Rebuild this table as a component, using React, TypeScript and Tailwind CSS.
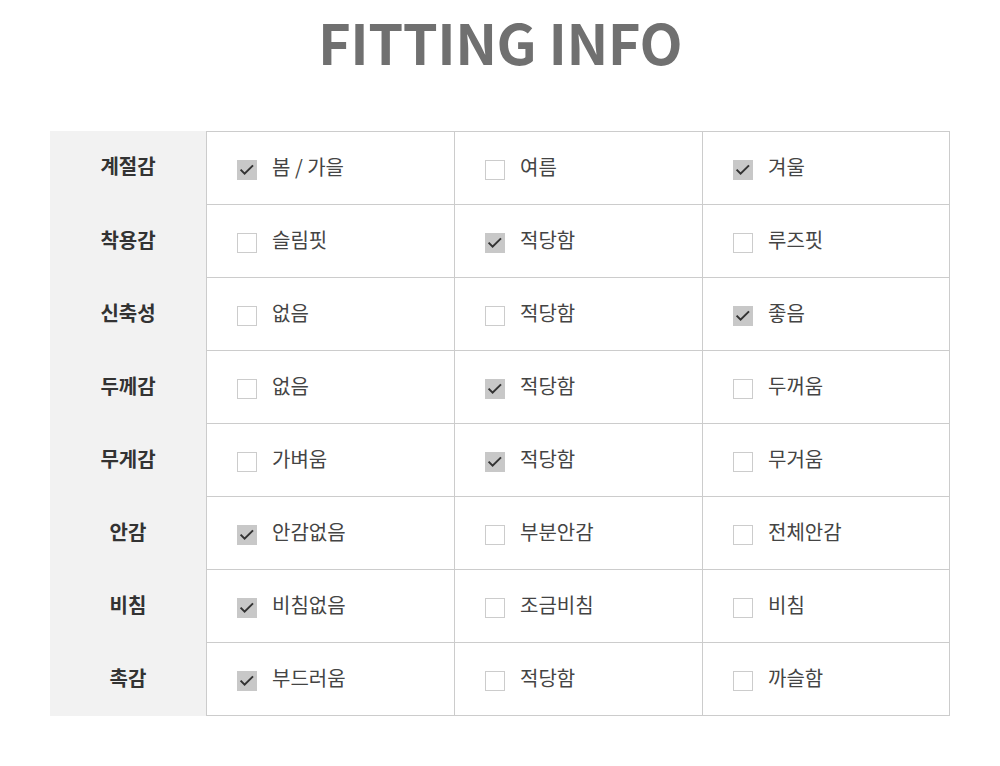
const rows: { label: string; opts: [string, boolean][] }[] = [
  { label: '계절감', opts: [['봄 / 가을', true], ['여름', false], ['겨울', true]] },
  { label: '착용감', opts: [['슬림핏', false], ['적당함', true], ['루즈핏', false]] },
  { label: '신축성', opts: [['없음', false], ['적당함', false], ['좋음', true]] },
  { label: '두께감', opts: [['없음', false], ['적당함', true], ['두꺼움', false]] },
  { label: '무게감', opts: [['가벼움', false], ['적당함', true], ['무거움', false]] },
  { label: '안감', opts: [['안감없음', true], ['부분안감', false], ['전체안감', false]] },
  { label: '비침', opts: [['비침없음', true], ['조금비침', false], ['비침', false]] },
  { label: '촉감', opts: [['부드러움', true], ['적당함', false], ['까슬함', false]] },
];

function Box({ checked }: { checked: boolean }) {
  if (checked) {
    return (
      <span className="block h-5 w-5 bg-[#c8c8c8]">
        <svg width="20" height="20" viewBox="0 0 20 20" fill="none">
          <path d="M3.6 9.6 L7.6 13.6 L16 5.4" stroke="#333" strokeWidth="2" />
        </svg>
      </span>
    );
  }
  return <span className="block h-5 w-5 border border-[#cccccc] bg-white" />;
}

export default function App() {
  return (
    <div className="min-h-[766px] bg-white font-['Noto_Sans_CJK_KR','Noto_Sans',sans-serif]">
      <h1 className="pt-[3px] text-center text-[56px] font-bold leading-[76px] tracking-[-0.5px] text-[#707070]">
        FITTING INFO
      </h1>
      <div className="mx-[50px] mt-[52px] w-[900px]">
        {rows.map((row, i) => (
          <div key={row.label} className={`flex ${i === 0 ? 'h-[74px]' : 'h-[73px]'}`}>
            <div className="flex w-[156px] items-center justify-center bg-[#f2f2f2] pb-1 text-[20px] font-bold text-[#333]">
              {row.label}
            </div>
            <div className={`grid flex-1 grid-cols-[248px_248px_1fr] border-r border-b border-l border-[#cccccc] ${i === 0 ? 'border-t' : ''}`}>
              {row.opts.map(([text, checked], j) => (
                <div
                  key={j}
                  className={`flex items-center gap-[15px] pl-[30px] pt-[4px] ${j < 2 ? 'border-r border-[#cccccc]' : ''}`}
                >
                  <Box checked={checked} />
                  <span className="pb-[6px] text-[20px] text-[#444]">{text}</span>
                </div>
              ))}
            </div>
          </div>
        ))}
      </div>
    </div>
  );
}
